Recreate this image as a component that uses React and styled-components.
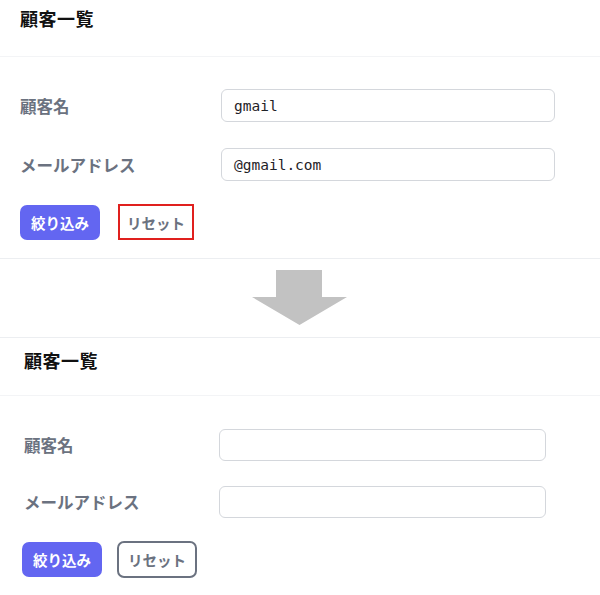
import React from 'react'
import styled, { createGlobalStyle } from 'styled-components'

const Global = createGlobalStyle`
  body {
    margin: 0;
    background: #ffffff;
    font-family: "Noto Sans CJK JP", "Noto Sans", sans-serif;
  }
`

const Page = styled.div`
  width: 600px;
  display: flex;
  flex-direction: column;
`

const Panel = styled.section`
  display: flex;
  flex-direction: column;
  border-top: ${p => (p.$bordered ? '1px solid #eceef1' : 'none')};
`

const Header = styled.div`
  height: ${p => p.$height}px;
  padding: ${p => p.$top}px 0 0 ${p => p.$inset}px;
  display: flex;
  align-items: flex-start;
  border-bottom: 1px solid #f3f4f6;
  box-sizing: border-box;
`

const Title = styled.h2`
  margin: 0;
  font-size: 18px;
  line-height: 27px;
  font-weight: 700;
  color: #111111;
  letter-spacing: 0.5px;
`

const Form = styled.div`
  display: flex;
  flex-direction: column;
  gap: ${p => p.$gap}px;
  padding: ${p => p.$top}px 0 18px ${p => p.$inset}px;
  border-bottom: ${p => (p.$bordered ? '1px solid #eceef1' : 'none')};
`

const Row = styled.div`
  display: flex;
  align-items: center;
`

const Label = styled.label`
  width: ${p => p.$width}px;
  font-size: 16.5px;
  font-weight: 700;
  color: #6b7280;
`

const Input = styled.div`
  width: ${p => p.$width}px;
  height: ${p => p.$height}px;
  box-sizing: border-box;
  border: 1px solid #d4d7dc;
  border-radius: 6px;
  padding: 0 12px;
  display: flex;
  align-items: center;
  font-family: "DejaVu Sans Mono", "Liberation Mono", monospace;
  font-size: 14.5px;
  color: #1f2328;
`

const Actions = styled.div`
  display: flex;
  align-items: center;
  gap: ${p => p.$gap}px;
  margin-top: ${p => p.$offset}px;
  margin-left: ${p => p.$shift}px;
`

const Button = styled.button`
  height: ${p => p.$height}px;
  padding: 0 ${p => p.$pad}px;
  box-sizing: border-box;
  border-radius: ${p => (p.$marked ? 0 : 7)}px;
  font-family: "Noto Sans CJK JP", sans-serif;
  font-size: 14.5px;
  font-weight: 700;
  cursor: pointer;
  background: ${p => (p.$primary ? '#6366f1' : '#ffffff')};
  color: ${p => (p.$primary ? '#ffffff' : '#6b7280')};
  border: ${p =>
    p.$marked ? '2px solid #e0201e' : p.$outlined ? '2px solid #6b7280' : 'none'};
`

const ArrowZone = styled.div`
  height: 78px;
  display: flex;
  justify-content: center;
  align-items: flex-start;
  padding-top: 11px;
  box-sizing: border-box;
`

const DownArrow = () => (
  <svg width="96" height="56" viewBox="0 0 96 56">
    <path d="M24 0 H70 V27 H95 L47.5 55 L0 27 H24 Z" fill="#c2c2c2" />
  </svg>
)

const FilterPanel = ({ name, mail, inset, labelWidth, inputWidth, headerHeight, titleTop, top, rowGap, inputHeight, actionsTop, bordered, marked }) => (
  <Panel $bordered={bordered}>
    <Header $height={headerHeight} $top={titleTop} $inset={inset}>
      <Title>顧客一覧</Title>
    </Header>
    <Form $top={top} $gap={rowGap} $inset={inset} $bordered={!bordered}>
      <Row>
        <Label $width={labelWidth}>顧客名</Label>
        <Input $width={inputWidth} $height={inputHeight}>{name}</Input>
      </Row>
      <Row>
        <Label $width={labelWidth}>メールアドレス</Label>
        <Input $width={inputWidth} $height={inputHeight}>{mail}</Input>
      </Row>
      <Actions $gap={marked ? 18 : 15} $offset={actionsTop} $shift={marked ? 0 : -2}>
        <Button $primary $height={35} $pad={11}>絞り込み</Button>
        {marked ? (
          <Button $marked $height={36} $pad={7}>リセット</Button>
        ) : (
          <Button $outlined $height={37} $pad={9}>リセット</Button>
        )}
      </Actions>
    </Form>
  </Panel>
)

export default function App() {
  return (
    <Page>
      <Global />
      <FilterPanel
        name="gmail"
        mail="@gmail.com"
        inset={20}
        labelWidth={201}
        inputWidth={334}
        inputHeight={33}
        headerHeight={57}
        titleTop={5}
        top={32}
        rowGap={26}
        actionsTop={-3}
        marked
      />
      <ArrowZone>
        <DownArrow />
      </ArrowZone>
      <FilterPanel
        name=""
        mail=""
        inset={24}
        labelWidth={195}
        inputWidth={327}
        inputHeight={32}
        headerHeight={58}
        titleTop={9}
        top={33}
        rowGap={25}
        actionsTop={-2}
        bordered
      />
    </Page>
  )
}
